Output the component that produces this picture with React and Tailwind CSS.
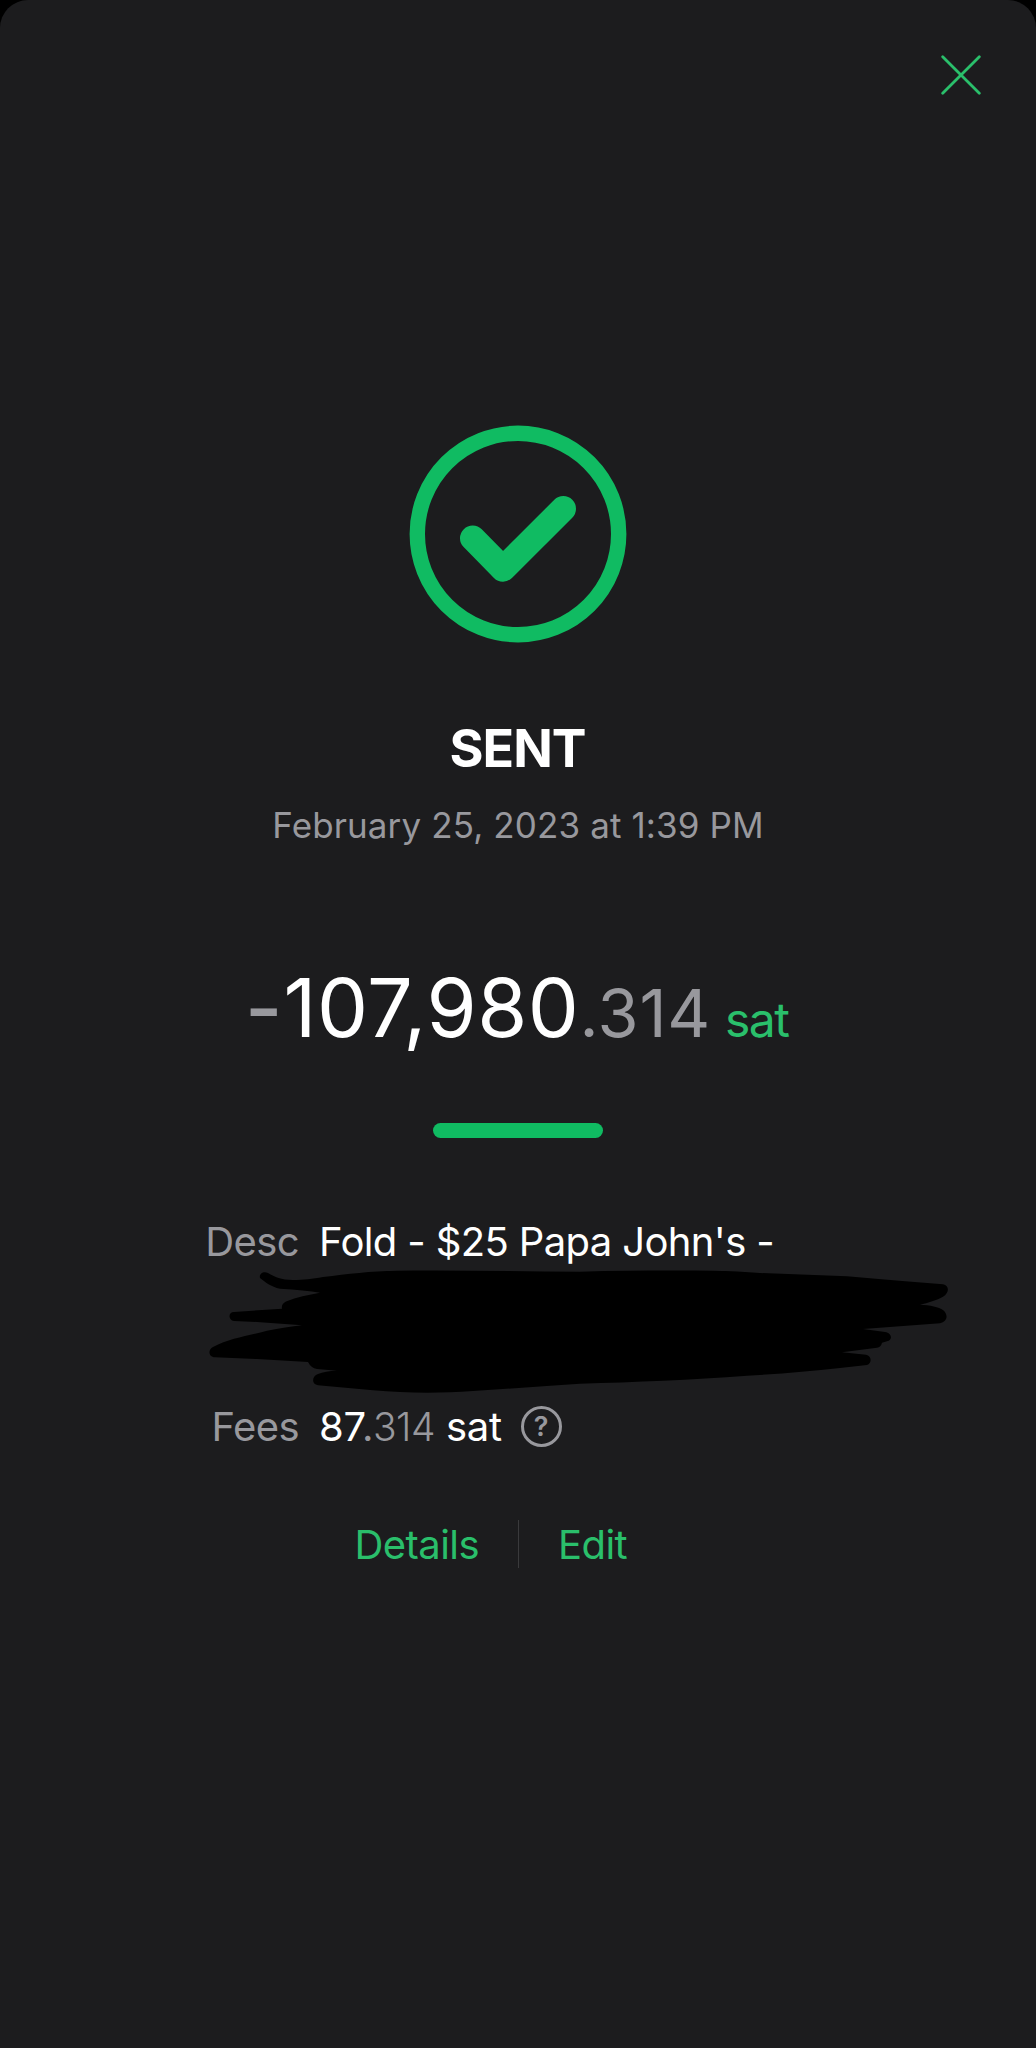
import React from 'react';

const payment = {
  status: 'SENT',
  date: 'February 25, 2023 at 1:39 PM',
  amount: '107,980',
  amountFraction: '.314',
  desc: "Fold - $25 Papa John's -",
  fees: '87',
  feesFraction: '314',
};

const CloseIcon = () => (
  <svg width="40" height="40" viewBox="0 0 40 40" fill="none" stroke="#2abf6b" strokeWidth="2.8" strokeLinecap="round">
    <path d="M1.7 1.7 38.3 38.3M38.3 1.7 1.7 38.3" />
  </svg>
);

const SentIcon = () => (
  <svg width="218" height="218" viewBox="0 0 218 218" fill="none" stroke="#10bb62">
    <circle cx="109" cy="109" r="100.7" strokeWidth="15.4" />
    <path d="M63.7 113.2 94 144 154.3 83.7" strokeWidth="25.4" strokeLinecap="round" strokeLinejoin="round" />
  </svg>
);

const HelpIcon = () => (
  <span className="flex h-[41px] w-[41px] items-center justify-center rounded-full border-[3px] border-[#98989d] text-[27px] leading-none font-semibold tracking-normal text-[#98989d]">
    ?
  </span>
);

// marker strokes that hide the rest of the description
const Scribble = () => (
  <svg className="block" width="1036" height="130" viewBox="0 1267 1036 130" fill="#000">
    <path d="M260 1278C259 1274 263 1271 268 1273C275 1277 281 1280 293 1280C304 1280 312 1279 323 1277C348 1274 370 1271 397 1270.7C460 1270 520 1271.5 580 1271.7C625 1270.5 668 1270.5 713 1270.7Q738 1271 760 1273L847 1276.3Q900 1281 943 1284.3C950 1286 949 1293 943 1296.7C937 1300 928 1303 920 1304.7C930 1305 939 1307 943 1310C949 1315 947 1322 940 1323.3L863 1329L885 1332C892 1333 893 1340 887 1341.3L882 1342.7Q881 1347 877 1347.8L842 1352.3L866 1354.7C872 1356 872 1363 867 1365L840 1368C810 1371 780 1374 747 1375.7C692 1380 635 1382 580 1383.7C542 1386 508 1389 473 1391C438 1393.5 405 1393 373 1390.3L318 1385.3C311 1384 312 1376 318 1374Q325 1371 337 1370.7L317 1369Q311 1368 308 1362L257 1359L215 1357.3C208 1357 208 1349 213 1347C230 1338 248 1336 267 1330.7Q286 1327 302 1325.3L257 1322L234 1321C228 1320 228 1312 234 1312L282 1308.7Q281 1304 286 1301.5C297 1297 308 1295 320 1292.7Q305 1290 280 1288.7C271 1287 265 1282 260 1278Z" />
  </svg>
);

const App = () => {
  return (
    <div className="h-[2048px] w-[1036px] overflow-hidden bg-black font-['Inter',sans-serif]">
      <div className="flex h-full flex-col rounded-t-[28px] bg-[#1c1c1e]">
        <div className="flex justify-end pt-[55px] pr-[55px]">
          <button aria-label="Close">
            <CloseIcon />
          </button>
        </div>

        <div className="mt-[330px] flex justify-center">
          <SentIcon />
        </div>

        <h1 className="mt-[76px] pr-px text-center text-[52px] leading-[60px] font-bold tracking-[-1px] text-white">
          {payment.status}
        </h1>
        <p className="mt-[21px] text-center text-[35px] leading-[50px] tracking-[0.12px] text-[#98989d]">
          {payment.date}
        </p>

        <div className="mt-[108px] flex h-[100px] items-baseline pl-[245px] leading-[100px] whitespace-pre">
          <span className="text-[81px] font-medium text-[#98989d]">-</span>
          <span className="ml-px text-[81px] tracking-[0.5px] text-white">{payment.amount}</span>
          <span className="text-[66.5px] tracking-[0.8px] text-[#98989d]">{payment.amountFraction}</span>
          <span className="ml-[14px] text-[48px] tracking-[-1.5px] text-[#2abf6b]">sat</span>
        </div>

        <div className="mt-[65px] ml-[433px] h-[15px] w-[170px] rounded-full bg-[#10bb62]" />

        <div className="mt-[79px] flex text-[40px] leading-[50px] tracking-[-0.63px]">
          <span className="w-[299px] text-right text-[#98989d]">Desc</span>
          <span className="ml-[20px] whitespace-pre text-white">{payment.desc}</span>
        </div>

        <Scribble />

        <div className="mt-[5px] flex items-baseline text-[40px] leading-[50px] tracking-[-0.6px]">
          <span className="w-[299px] text-right text-[#98989d]">Fees</span>
          <span className="ml-[20px] tracking-[-0.2px] text-white">{payment.fees}</span>
          <span className="-ml-[4px] text-[#98989d]">.</span>
          <span className="text-[39px] font-light tracking-[-0.5px] text-[#98989d]">{payment.feesFraction}</span>
          <span className="ml-[11px] tracking-[-0.3px] text-white">sat</span>
          <span className="ml-[19px] flex self-center pb-px">
            <HelpIcon />
          </span>
        </div>

        <div className="mt-[68px] flex h-[48px] text-[40px] leading-[50px] tracking-[-0.55px] text-[#2abf6b]">
          <button className="w-[518px] pr-[39px] text-right">Details</button>
          <span className="w-px bg-[#3a3a3c]" />
          <button className="pl-[39px]">Edit</button>
        </div>
      </div>
    </div>
  );
};

export default App;
